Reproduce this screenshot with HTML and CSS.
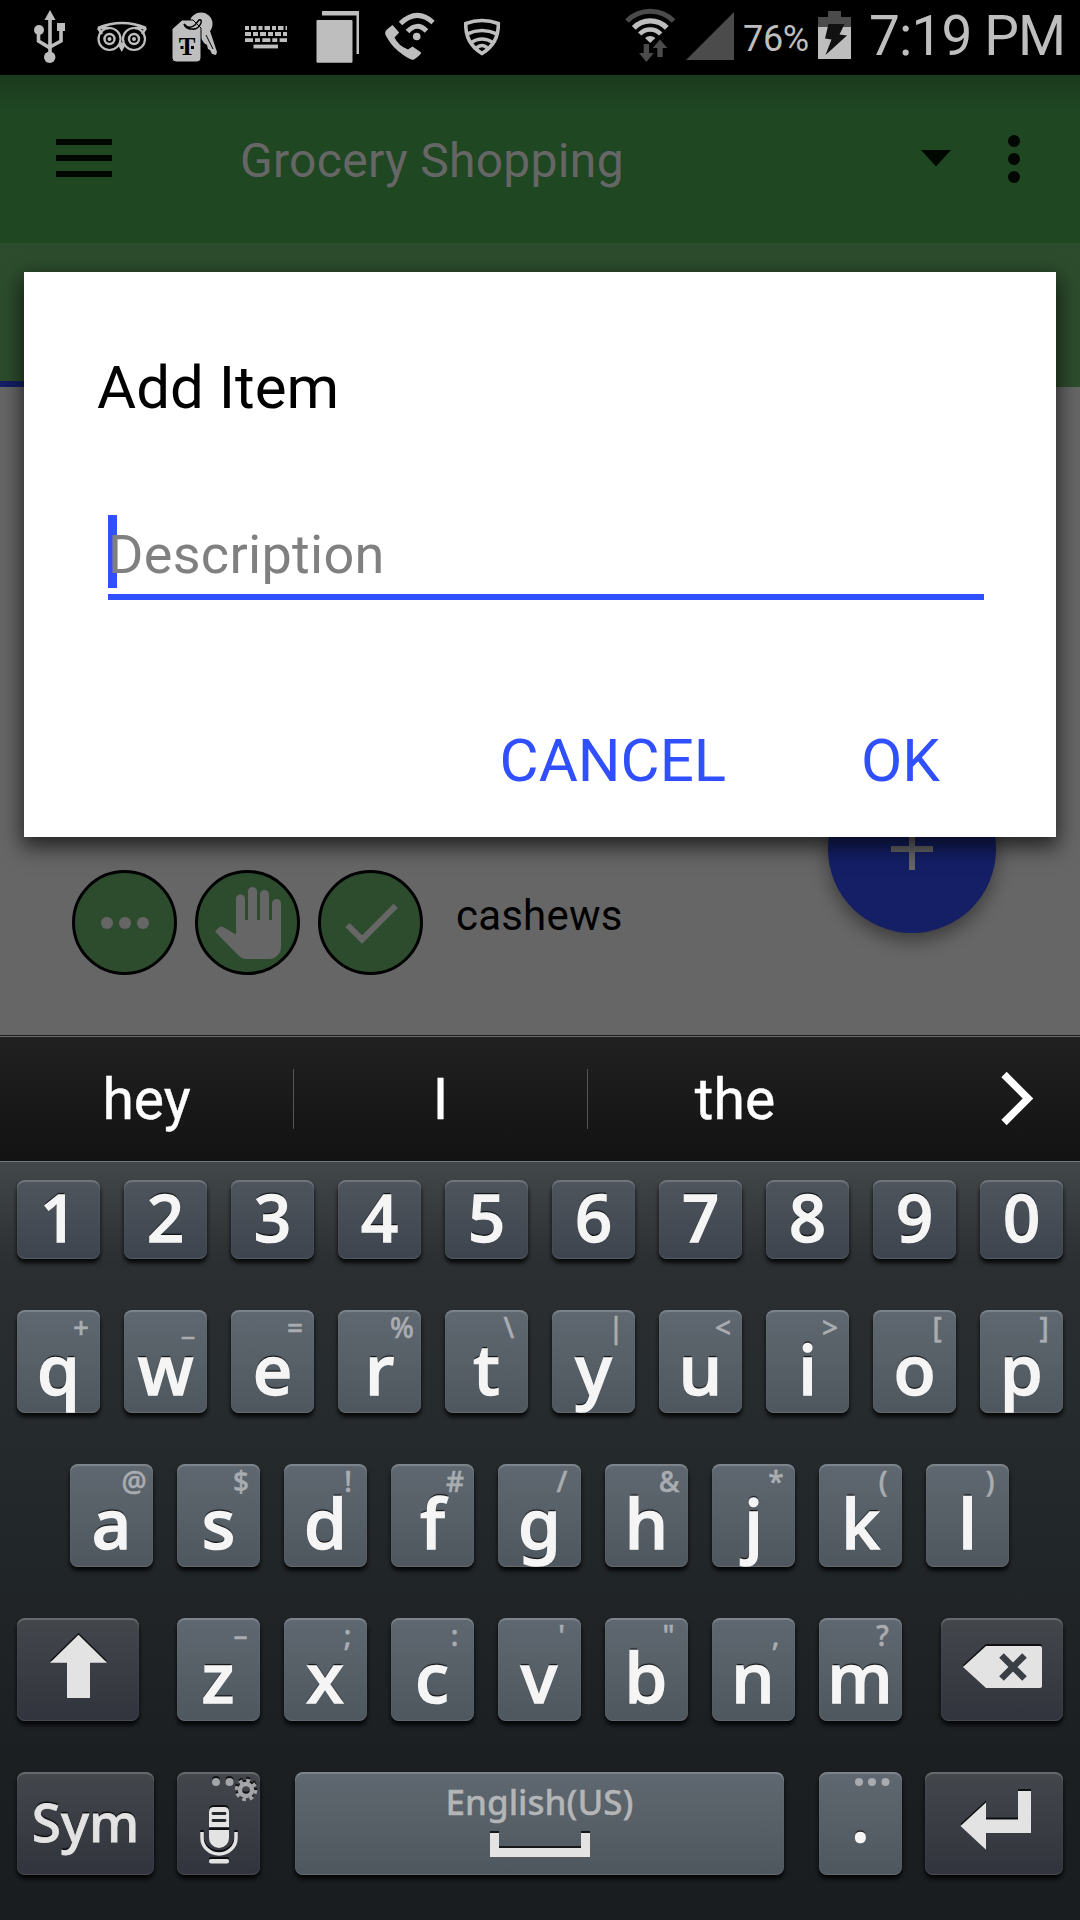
FILE: index.html
```html
<!DOCTYPE html>
<html lang="en">
<head>
<meta charset="utf-8">
<title>Grocery Shopping</title>
<link rel="stylesheet" href="styles.css">
</head>
<body>
<header class="status">
  <svg width="50" height="75" viewBox="30 0 50 75" fill="none" stroke="#bebebe" stroke-width="3.6"><path d="M50 18V56M38.500 30V41L50 48M61 30V41L50 47"/><g fill="#bebebe" stroke="none"><path d="M50 10l5.500 10h-11z"/><circle cx="39" cy="30" r="5"/><path d="M57 23h8v8h-8z"/><circle cx="49.700" cy="57.300" r="5.700"/></g></svg>
  <svg width="80" height="75" viewBox="80 0 80 75" fill="none" stroke="#bebebe"><path d="M98 28Q122 18 146 28M98 28h11M146 28h-11M98 28l4 6M146 28l-4 6" stroke-width="2.600"/><circle cx="109.500" cy="39" r="11" stroke-width="2.200"/><circle cx="134" cy="39" r="11" stroke-width="2.200"/><circle cx="109.500" cy="39" r="5" stroke-width="2.400"/><circle cx="134" cy="39" r="5" stroke-width="2.400"/><g fill="#bebebe" stroke="none"><circle cx="109.500" cy="39" r="2"/><circle cx="134" cy="39" r="2"/><path d="M118 45l3.700 7 3.800-7-3.800-3z"/></g></svg>
  <svg width="70" height="75" viewBox="160 0 70 75"><g fill="#bebebe"><circle cx="201" cy="24" r="11.500"/><path d="M197 32l12-4 8 24-1 3-4-1-2-4-2-1-1-4-3-2z"/></g><path d="M206 35l7 14" stroke="#000" stroke-width="1"/><path d="M182 20h11l8 8v30q0 4-4 4h-21q-4 0-4-4V29z" fill="#bebebe" stroke="#000"/><path d="M184 24q5 6 11 1l4-5q3-1 2 3-3 7-9 6-5 0-7-3z" fill="none" stroke="#000" stroke-width="1.500"/><text class="tag-letter" x="187.200" y="55" text-anchor="middle">T</text><path d="M180.500 46h3v3h-3zM191 46h3v3h-3z" fill="#000"/></svg>
  <svg width="70" height="75" viewBox="230 0 70 75" fill="none" stroke="#bebebe"><path d="M245 28h42" stroke-width="3.800" stroke-dasharray="4 2 5.500 2"/><path d="M245 34h42" stroke-width="3.800" stroke-dasharray="6 2 5 2"/><path d="M245 40.200h42" stroke-width="3.800" stroke-dasharray="8 2 5 2.300"/><path d="M253.500 46.500h24.500" stroke-width="3.800"/></svg>
  <svg width="72" height="75" viewBox="300 0 72 75"><path d="M322 11h37v43h-2.500V15.500H322z" fill="#bebebe"/><rect x="316.500" y="20" width="36" height="42.700" rx="1" fill="#bebebe"/></svg>
  <svg width="76" height="75" viewBox="372 0 76 75" fill="none" stroke="#bebebe" stroke-width="5"><path d="M400.500 23.500Q417 8 433 22.500M407.500 31.500Q417 21.500 426.500 31"/><circle cx="416.700" cy="36.500" r="3.800" fill="#bebebe" stroke="none"/><path d="M392.500 25l6.700 7.500-4.700 5q4 8.500 13.500 12l4.500-3 8.700 6q0 2-7.200 7-3 1-10-4-12-8-17-18-4-5 .500-8.500z" fill="#bebebe" stroke="none"/></svg>
  <svg width="68" height="75" viewBox="448 0 68 75" fill="none" stroke="#bebebe" stroke-width="3.600"><path d="M465.800 23.500Q482 17.500 498.300 23.500Q499 43 482 53.500Q465 43 465.800 23.500z"/><path d="M467 34q15-7 30 0M471 42.500q11-7 22 0M475.500 49q6.500-7 13 0"/></svg>
  <span class="grow"></span>
  <svg width="60" height="75" viewBox="620 0 60 75" fill="none" stroke="#bebebe"><path d="M627 21a32.500 32.500 0 0 1 46.500 0" stroke="#4b4b4b" stroke-width="5"/><path d="M633.800 27.800a23 23 0 0 1 33 0" stroke-width="5.300"/><path d="M639.700 34a14.500 14.500 0 0 1 21 0" stroke-width="4.600"/><path d="M650.200 43l-5.200-5q5-4 10.400 0z" fill="#bebebe" stroke="none"/><path d="M643.700 44h5.400v9h4.700L646.400 62 639 53h4.700zM657.300 57v-9h-4.600l7.300-8.500 7.300 8.500h-4.600v9z" fill="#4b4b4b" stroke="none"/></svg>
  <svg width="60" height="75" viewBox="680 0 60 75"><path d="M734 12v48h-48z" fill="#4b4b4b"/></svg>
  <span class="battery-level">76%</span>
  <svg width="48" height="75" viewBox="812 0 48 75"><path d="M818 27V17h10v-6h13v6h10v10z" fill="#4b4b4b"/><path d="M818 27h33v32h-33z" fill="#bebebe"/><path d="M828.500 24h16l-5 10.500 7.500 1L825.500 55l6-15.500-6.500-1z" fill="#111"/></svg>
  <span class="clock">7:19 PM</span>
</header>

<div class="appbar">
  <svg class="menu" width="56" height="38" viewBox="0 0 56 38" fill="#010801"><path d="M0 0h56v6H0zM0 16h56v6H0zM0 32h56v6H0z"/></svg>
  <h1 class="title">Grocery Shopping</h1>
  <svg class="caret" width="30" height="17" viewBox="0 0 30 17"><path d="M0 0h30L15 16.500z" fill="#010801"/></svg>
  <svg width="12" height="48" viewBox="0 0 12 48" fill="#010801"><circle cx="6" cy="6" r="6"/><circle cx="6" cy="24" r="6"/><circle cx="6" cy="42" r="6"/></svg>
</div>
<div class="tabs"><div class="tab"></div></div>

<main class="list">
  <div class="item">
    <span class="circle"><svg width="99" height="99" viewBox="75 873 99 99" fill="#666"><circle cx="107" cy="923" r="6"/><circle cx="125" cy="923" r="6"/><circle cx="143" cy="923" r="6"/></svg></span>
    <span class="circle"><svg width="99" height="99" viewBox="198 873 99 99" fill="#666"><path d="M281 903.500V947a12 12 0 0 1-12 12h-22q-5 0-8.500-3.500L215 931.500l3.500-3.500q2-2 4.500-1L236 934.500V899a4.500 4.500 0 0 1 9 0v21h3v-28.500a4.500 4.500 0 0 1 9 0V920h3v-25.500a4.500 4.500 0 0 1 9 0V920h3v-16.500a4.500 4.500 0 0 1 9 0z"/></svg></span>
    <span class="circle"><svg width="99" height="99" viewBox="321 873 99 99" fill="none" stroke="#666" stroke-width="6"><path d="M347.500 925.200L362 939.500 395.700 905.800"/></svg></span>
    <span class="item-name">cashews</span>
  </div>
  <div class="fab"><svg width="42" height="42" viewBox="0 0 42 42" fill="#666"><path d="M18 0h6v18h18v6H24v18h-6V24H0v-6h18z"/></svg></div>
</main>

<section class="dialog">
  <h2 class="dialog-title">Add Item</h2>
  <div class="field"><span class="cursor"></span><span class="placeholder">Description</span></div>
  <div class="actions"><span>CANCEL</span><span>OK</span></div>
</section>

<div class="suggest">
  <span class="word">hey</span><span class="word">I</span><span class="word last">the</span>
  <svg class="more" width="36" height="58" viewBox="999 1071 36 58" fill="none" stroke="#fff" stroke-width="7.500"><path d="M1004 1075.500L1028 1099.500 1004 1123.500"/></svg>
</div>
<div class="keyboard">
  <div class="row digits"><b class="key">1</b><b class="key">2</b><b class="key">3</b><b class="key">4</b><b class="key">5</b><b class="key">6</b><b class="key">7</b><b class="key">8</b><b class="key">9</b><b class="key">0</b></div>
  <div class="row"><b class="key">q<i>+</i></b><b class="key">w<i class="raised">_</i></b><b class="key">e<i>=</i></b><b class="key">r<i>%</i></b><b class="key">t<i>\</i></b><b class="key">y<i>|</i></b><b class="key">u<i>&lt;</i></b><b class="key">i<i>&gt;</i></b><b class="key">o<i>[</i></b><b class="key">p<i>]</i></b></div>
  <div class="row home"><b class="key">a<i>@</i></b><b class="key">s<i>$</i></b><b class="key">d<i>!</i></b><b class="key">f<i>#</i></b><b class="key">g<i>/</i></b><b class="key">h<i>&amp;</i></b><b class="key">j<i>*</i></b><b class="key">k<i>(</i></b><b class="key">l<i>)</i></b></div>
  <div class="row wide">
    <b class="key dark side"><svg width="122" height="103" viewBox="17 1618 122 103"><path d="M78.500 1634.700L107 1662.700H90V1698H67V1662.700H50z" fill="#e3e3e3"/></svg></b>
    <div class="letters"><b class="key">z<i>–</i></b><b class="key">x<i>;</i></b><b class="key">c<i>:</i></b><b class="key">v<i>'</i></b><b class="key">b<i>"</i></b><b class="key">n<i>,</i></b><b class="key">m<i>?</i></b></div>
    <b class="key dark side"><svg width="122" height="103" viewBox="941 1618 122 103"><path d="M963 1667L986 1646h54q2 0 2 2v38q0 2-2 2h-54z" fill="#e3e3e3"/><path d="M1001.500 1655.500l23 23M1024.500 1655.500l-23 23" stroke="#3a3e45" stroke-width="6.500"/></svg></b>
  </div>
  <div class="row wide">
    <b class="key dark sym">Sym</b>
    <b class="key dark mic"><svg width="83" height="103" viewBox="177 1772 83 103" fill="#e3e3e3"><g fill="#a3a5a8"><circle cx="216" cy="1782" r="4"/><circle cx="229.500" cy="1782" r="4"/></g><circle cx="246" cy="1790" r="6" fill="none" stroke="#a3a5a8" stroke-width="4.500"/><circle cx="246" cy="1790" r="9.500" fill="none" stroke="#a3a5a8" stroke-width="3.500" stroke-dasharray="3.730 3.730"/><path d="M214 1807h10q5 0 5 5v15h-20v-15q0-5 5-5zM209 1830h20v8a10 10 0 0 1-20 0z"/><path d="M213 1813.500h12M213 1820.500h12" stroke="#24272b" stroke-width="2.800" stroke-linecap="round"/><path d="M202 1832v6a17 16 0 0 0 34 0v-6" fill="none" stroke="#e3e3e3" stroke-width="3.500"/><rect x="209" y="1859" width="20" height="4.500" rx="2"/></svg></b>
    <b class="key space"><span>English(US)</span><svg width="100" height="26" viewBox="0 0 100 26"><path d="M0 0h9v15h82V0h9v24H0z" fill="#e3e3e3"/></svg></b>
    <b class="key dot">.<svg class="dots" width="36" height="10" viewBox="0 0 36 10" fill="#a9abae"><circle cx="5" cy="5" r="4"/><circle cx="18" cy="5" r="4"/><circle cx="31.500" cy="5" r="4"/></svg></b>
    <b class="key dark enter"><svg width="138" height="103" viewBox="925 1772 138 103"><path d="M960.500 1826L986 1802.500V1819.500H1018V1791H1031V1833H986V1849.700z" fill="#e3e3e3"/></svg></b>
  </div>
</div>
</body>
</html>
```
FILE: styles.css
```css
* { box-sizing: border-box; }
body {
  margin: 0;
  width: 1080px;
  height: 1920px;
  position: relative;
  overflow: hidden;
  display: flex;
  flex-direction: column;
  background: #666;
  font-family: Roboto, sans-serif;
}
svg { display: block; flex: none; }

.status {
  height: 75px;
  flex: none;
  display: flex;
  align-items: center;
  padding: 0 16px 0 30px;
  background: #000;
  color: #bebebe;
  white-space: nowrap;
}
.grow { flex: 1; }
.tag-letter { font: bold 25px "Liberation Serif", serif; fill: #000; }
.battery-level { width: 72px; padding: 3px 0 0 3px; font-size: 36px; letter-spacing: -.3px; }
.clock { width: 195px; margin-left: 9px; padding-bottom: 3px; font-size: 55px; letter-spacing: -.9px; }

.appbar {
  height: 168px;
  flex: none;
  display: flex;
  align-items: center;
  padding: 0 60px 0 56px;
  background: linear-gradient(#1b3b1e, #1f4722 36px);
}
.menu { margin-bottom: 2px; }
.title { flex: 1; margin: 0; padding: 3px 0 0 128px; font-size: 48px; font-weight: 400; letter-spacing: .3px; color: #666; }
.caret { margin: 0 57px 2px 0; }
.tabs { height: 144px; flex: none; display: flex; background: #2d4c2d; }
.tab { width: 360px; border-bottom: 6px solid #141f66; }

.list {
  height: 648px;
  flex: none;
  position: relative;
  display: flex;
  align-items: flex-end;
  padding: 0 72px 60px;
}
.item { display: flex; align-items: center; gap: 18px; }
.circle {
  width: 105px;
  height: 105px;
  border: 3px solid #000;
  border-radius: 50%;
  background: #2d4c2d;
}
.item-name { padding: 0 0 14px 15px; font-size: 42px; letter-spacing: .2px; color: #000; }
.fab {
  position: absolute;
  left: 828px;
  top: 378px;
  width: 168px;
  height: 168px;
  display: flex;
  align-items: center;
  justify-content: center;
  border-radius: 50%;
  background: #141f66;
  box-shadow: 0 8px 18px rgba(0, 0, 0, .4);
}

.dialog {
  position: absolute;
  left: 24px;
  top: 272px;
  width: 1032px;
  height: 565px;
  display: flex;
  flex-direction: column;
  padding: 79px 72px 0 73px;
  background: #fff;
  box-shadow: 0 8px 20px 2px rgba(0, 0, 0, .66);
}
.dialog-title { margin: 0; font-size: 60px; font-weight: 400; line-height: 73px; color: #000; }
.field {
  position: relative;
  height: 85px;
  margin: 91px 0 0 11px;
  border-bottom: 6px solid #3050ff;
  font-size: 54px;
  line-height: 79px;
  letter-spacing: .3px;
  color: #808080;
}
.cursor { position: absolute; left: 0; top: 0; width: 9px; height: 73px; background: #3050ff; }
.placeholder { position: relative; }
.actions {
  display: flex;
  justify-content: flex-end;
  gap: 135px;
  margin: 124px 44px 0 0;
  font-size: 60px;
  line-height: 73px;
  color: #3050ff;
}

.suggest {
  height: 126px;
  flex: none;
  display: flex;
  align-items: center;
  border-top: 1px solid #1b1b1b;
  box-shadow: inset 0 1px #6a6a6a;
  background: linear-gradient(#212121, #121212);
  color: #fff;
}
.word {
  width: 294px;
  height: 60px;
  display: flex;
  justify-content: center;
  align-items: center;
  padding-top: 3px;
  border-right: 1px solid #555;
  font-size: 57px;
  line-height: 60px;
  -webkit-text-stroke: .4px #fff;
}
.word.last { border: 0; }
.more { margin-left: 117px; }

.keyboard {
  flex: 1;
  display: flex;
  flex-direction: column;
  align-items: center;
  gap: 51px;
  padding: 18px 17px 0;
  border-top: 1px solid #72787b;
  background: linear-gradient(#42474a, #2b2f32 100px, #252a2d 270px, #1b1f22 600px, #191d20);
  font-family: "Noto Sans", sans-serif;
}
.row { display: flex; gap: 24px; }
.home { padding-right: 1px; }
.key {
  position: relative;
  width: 83px;
  height: 103px;
  border-radius: 8px;
  background: linear-gradient(#5f6770, #4f575e);
  box-shadow: inset 0 2px 1px rgba(255, 255, 255, .2), inset 0 -1px 1px rgba(255, 255, 255, .12), 0 4px 4px rgba(0, 0, 0, .85);
  font-size: 69px;
  font-weight: 500;
  line-height: 116px;
  text-align: center;
  color: #f5f5f5;
  text-shadow: 0 -2px 1px rgba(0, 0, 0, .8);
  -webkit-text-stroke: 1.5px #f5f5f5;
}
.key svg { filter: drop-shadow(0 -2px 0 rgba(0, 0, 0, .75)); }
.digits .key { height: 79px; font-size: 65px; line-height: 74px; background: linear-gradient(#4e555d, #3e444d); }
.key i {
  position: absolute;
  top: 0;
  right: 0;
  width: 38px;
  font-size: 28px;
  font-style: normal;
  font-weight: 500;
  line-height: 34px;
  color: #a9adb1;
  text-shadow: none;
  -webkit-text-stroke: .5px #a9adb1;
}
.key .raised { top: -4px; }
.wide { width: 1046px; justify-content: space-between; }
.letters { display: flex; gap: 24px; margin-left: -2px; }
.key.dark { background: linear-gradient(#43464b, #31343c); color: #e3e3e3; }
.key.side { width: 122px; }
.key.sym { width: 137px; font-size: 53px; line-height: 100px; -webkit-text-stroke: .8px #e3e3e3; }
.key.mic { margin-left: -12px; }
.key.space {
  width: 489px;
  display: flex;
  flex-direction: column;
  align-items: center;
  font-size: 35px;
  line-height: 61px;
  color: #b4b5b6;
  -webkit-text-stroke: .4px #b4b5b6;
}
.key.space span { margin: -1px 0 1px; text-shadow: none; }
.key.dot { line-height: 86px; }
.key .dots { position: absolute; top: 5px; right: 12px; filter: none; }
.key.enter { width: 138px; margin-left: -12px; }
```
